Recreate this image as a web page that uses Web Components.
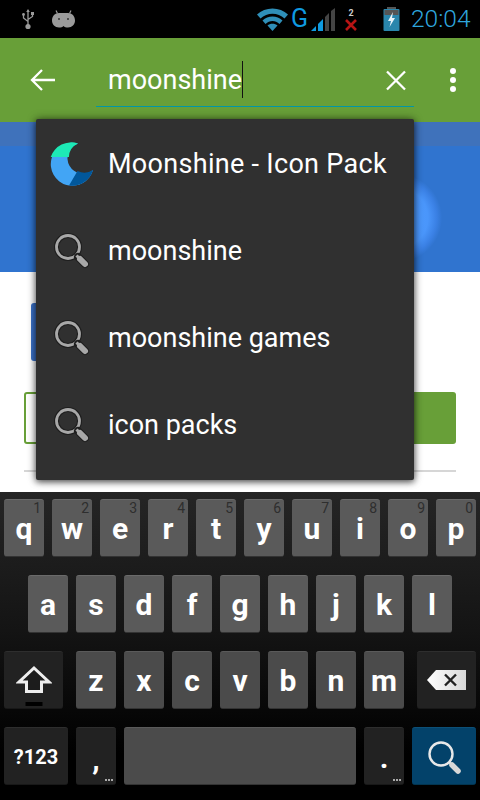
<!DOCTYPE html>
<html>
<head>
<meta charset="utf-8">
<style>
  html, body { margin: 0; padding: 0; background: #fff; }
  body { width: 480px; height: 800px; overflow: hidden; font-family: Roboto, "Liberation Sans", sans-serif; position: relative; }
</style>
</head>
<body>
<status-bar></status-bar>
<search-bar query="moonshine"></search-bar>
<page-behind></page-behind>
<suggestion-list>
  <suggestion-item kind="app">Moonshine - Icon Pack</suggestion-item>
  <suggestion-item>moonshine</suggestion-item>
  <suggestion-item>moonshine games</suggestion-item>
  <suggestion-item>icon packs</suggestion-item>
</suggestion-list>
<soft-keyboard></soft-keyboard>

<script>
'use strict';

const statusTemplate = document.createElement("template");
statusTemplate.innerHTML = `
  <style>
    :host { display: flex; align-items: center; height: 38px; background: #000; position: relative; }
    svg { display: block; flex: none; }
    .g { font: 400 25px Roboto, sans-serif; color: #0f9ae0; width: 17px; margin-left: 3px; line-height: 38px; height: 38px; }
    .time { font: 300 24.5px Roboto, sans-serif; color: #2fa6de; margin-left: 11px; line-height: 38px; }
    .two { font: 700 9px Roboto, sans-serif; color: #ccc; display: block; text-align: center; line-height: 8px; height: 8px; }
    .x { flex: none; width: 14px; margin-left: 8px; margin-top: 2px; }
  </style>
  <svg style="margin-left:21px" width="14" height="21" viewBox="0 0 14 21">
    <path d="M7 1.500V16M7 12.500L2.500 9V6M7 10.500L11.500 7.500V5" fill="none" stroke="#9a9a9a" stroke-width="1.300"/>
    <path d="M7 0L8.800 3H5.200Z" fill="#9a9a9a"/><circle cx="2.500" cy="5.500" r="1.400" fill="#9a9a9a"/>
    <rect x="10" y="3" width="3" height="3" fill="#9a9a9a"/><circle cx="7" cy="17.500" r="2.600" fill="#9a9a9a"/>
  </svg>
  <svg style="margin-left:17px" width="23" height="18" viewBox="0 0 23 18">
    <path d="M5.500 3.500L4 .5M17.500 3.500L19 .5" stroke="#9a9a9a" stroke-width="1.200"/>
    <path d="M7 3C3 3 0 6 0 10.500C0 14.500 3 17.500 7 17.500C9 17.500 10.500 17 11.500 16C12.500 17 14 17.500 16 17.500C20 17.500 23 14.500 23 10.500C23 6 20 3 16 3Z" fill="#9a9a9a"/>
    <circle cx="7" cy="9" r="1" fill="#333"/><circle cx="16" cy="9" r="1" fill="#333"/>
  </svg>
  <svg style="margin-left:182px" width="31" height="23" viewBox="0 0 31 23">
    <path d="M0 6.500C8 -1.500 23 -1.500 31 6.500L27.500 10.500C21 4 10 4 3.500 10.500Z" fill="#2f8fb8"/>
    <path d="M5.500 12.500C11 7 20 7 25.500 12.500L22.500 16C18.500 12 12.500 12 8.500 16Z" fill="#2f8fb8"/>
    <path d="M10.500 17.500C13 15 18 15 20.500 17.500L15.500 23Z" fill="#2f8fb8"/>
  </svg>
  <span class="g">G</span>
  <svg style="margin-left:3px" width="25" height="23" viewBox="0 0 25 23">
    <path d="M0 23L5 18V23Z" fill="#0f9ae0"/><path d="M7 16L12 11V23H7Z" fill="#0f9ae0"/>
    <path d="M14 9L18 5V23H14Z" fill="#444"/><path d="M20 3L24 0V23H20Z" fill="#444"/>
  </svg>
  <span class="x">
    <span class="two">2</span>
    <svg width="14" height="14" viewBox="0 0 14 14" style="margin-top:1px"><path d="M2 2L12 12M12 2L2 12" stroke="#b81414" stroke-width="2.600"/></svg>
  </span>
  <svg style="margin-left:25px" width="17" height="24" viewBox="0 0 17 24">
    <rect x="4" y="0" width="9" height="3" fill="#555"/>
    <rect x="0.500" y="2" width="16" height="22" rx="1" fill="#2a86ac"/>
    <rect x="1.500" y="3" width="14" height="5" fill="#555"/>
    <path d="M10 5L5 14H8L6.500 20L12 11H9Z" fill="#e8f4fa"/>
  </svg>
  <span class="time">20:04</span>
`;
class StatusBar extends HTMLElement {
  constructor() {
    super();
    this.attachShadow({ mode: "open" });
    this.shadowRoot.appendChild(statusTemplate.content.cloneNode(true));
  }
}
customElements.define("status-bar", StatusBar);

const searchTemplate = document.createElement("template");
searchTemplate.innerHTML = `
  <style>
    :host { display: flex; align-items: center; height: 84px; background: #689f38; color: #fff; }
    .back { flex: none; margin-left: 30px; display: block; }
    .field { flex: none; margin-left: 41px; width: 318px; height: 54px; box-sizing: border-box; border-bottom: 1px solid #0097a7;
      display: flex; align-items: center; padding-left: 12px; }
    .text { font-size: 27px; line-height: 36px; }
    .caret { width: 1px; height: 37px; background: #111; }
    .clear { flex: none; margin-left: -28px; position: relative; display: block; }
    .more { flex: none; margin-left: 44px; display: block; }
  </style>
  <svg class="back" width="25" height="24" viewBox="0 0 25 24"><path d="M12 2L2 12L12 22M2 12H25" fill="none" stroke="#fff" stroke-width="2.300"/></svg>
  <div class="field"><span class="text"></span><span class="caret"></span></div>
  <svg class="clear" width="20" height="21" viewBox="0 0 20 21"><path d="M1 1.500L19 19.500M19 1.500L1 19.500" stroke="#fff" stroke-width="2.300"/></svg>
  <svg class="more" width="6" height="24" viewBox="0 0 6 24"><circle cx="3" cy="3" r="3" fill="#fff"/><circle cx="3" cy="12" r="3" fill="#fff"/><circle cx="3" cy="21" r="3" fill="#fff"/></svg>
`;
class SearchBar extends HTMLElement {
  constructor() {
    super();
    this.attachShadow({ mode: "open" });
    this.shadowRoot.appendChild(searchTemplate.content.cloneNode(true));
  }
  connectedCallback() {
    this.shadowRoot.querySelector(".text").textContent = this.getAttribute("query");
  }
}
customElements.define("search-bar", SearchBar);

const pageTemplate = document.createElement("template");
pageTemplate.innerHTML = `
  <style>
    :host { display: flex; flex-direction: column; height: 370px; background: #fff; }
    .hero { height: 150px; background: radial-gradient(circle 44px at 398px 96px, #4f9cff 0%, #4a96fb 68%, #3a80e4 88%, #3074cf 100%), #2e6dc5; background-repeat: no-repeat; position: relative; }
    .strip { height: 24px; background: #3f72bb; }
    .blue { margin: 31px 0 0 31px; width: 200px; height: 58px; background: #3b72c8; border-radius: 3px; }
    .buttons { display: flex; margin: 31px 24px 0; gap: 6px; height: 52px; }
    .buttons div { flex: 1; border-radius: 3px; box-sizing: border-box; }
    .outline { border: 2px solid #689f38; }
    .fill { background: #689f38; }
    hr { margin: 26px 24px 0; border: 0; height: 2px; background: #d6d6d6; }
  </style>
  <div class="hero"><div class="strip"></div></div>
  <div class="blue"></div>
  <div class="buttons"><div class="outline"></div><div class="fill"></div></div>
  <hr>
`;
class PageBehind extends HTMLElement {
  constructor() {
    super();
    this.attachShadow({ mode: "open" });
    this.shadowRoot.appendChild(pageTemplate.content.cloneNode(true));
  }
}
customElements.define("page-behind", PageBehind);

const listTemplate = document.createElement("template");
listTemplate.innerHTML = `
  <style>
    :host { display: flex; flex-direction: column; position: absolute; left: 36px; top: 119px; width: 378px; height: 361px; padding: 1px 0 11px; box-sizing: border-box;
      background: #303030; border-radius: 2px; box-shadow: 0 2px 6px rgba(0,0,0,.55), 0 0 10px rgba(0,0,0,.4); }
  </style>
  <slot></slot>
`;
class SuggestionList extends HTMLElement {
  constructor() {
    super();
    this.attachShadow({ mode: "open" });
    this.shadowRoot.appendChild(listTemplate.content.cloneNode(true));
  }
}
customElements.define("suggestion-list", SuggestionList);

const itemTemplate = document.createElement("template");
itemTemplate.innerHTML = `
  <style>
    :host { display: flex; align-items: center; flex: 1; color: #fff; font-size: 27px; }
    :host([kind="app"]) { letter-spacing: 0.3px; }
    .icon { flex: none; width: 72px; display: flex; justify-content: center; }
    svg { display: block; }
    .label { white-space: nowrap; }
  </style>
  <div class="icon"></div>
  <div class="label"><slot></slot></div>
`;
const MOON_ICON = `<svg width="44" height="44" viewBox="0 0 44 44" style="margin-left:-1px">
  <path d="M28 1.500A21.500 21.500 0 1 0 43 28A15.500 15.500 0 1 1 28 1.500Z" fill="#42a5f5"/>
  <path d="M28 1.500A21.500 21.500 0 0 0 .7 15H18.900A15.500 15.500 0 0 1 28 1.500Z" fill="#1de9b6"/>
  <path d="M43 28A21.500 21.500 0 0 1 19 43.400L27.500 29A15.500 15.500 0 0 0 43 28Z" fill="#01579b"/>
</svg>`;
const SEARCH_ICON = `<svg width="36" height="36" viewBox="0 0 36 36">
  <circle cx="14" cy="14" r="11.500" fill="none" stroke="#1e1e1e" stroke-width="5"/>
  <circle cx="14" cy="14" r="11.500" fill="none" stroke="#a8a8a8" stroke-width="2.800"/>
  <path d="M24 24L31 31" stroke="#1e1e1e" stroke-width="8" stroke-linecap="round"/>
  <path d="M22.500 22.500L26 26" stroke="#a8a8a8" stroke-width="3"/>
  <path d="M26 26L31 31" stroke="#a8a8a8" stroke-width="6" stroke-linecap="round"/>
</svg>`;
class SuggestionItem extends HTMLElement {
  constructor() {
    super();
    this.attachShadow({ mode: "open" });
    this.shadowRoot.appendChild(itemTemplate.content.cloneNode(true));
  }
  connectedCallback() {
    this.shadowRoot.querySelector(".icon").innerHTML = this.getAttribute("kind") == "app" ? MOON_ICON : SEARCH_ICON;
  }
}
customElements.define("suggestion-item", SuggestionItem);

const keyTemplate = document.createElement("template");
keyTemplate.innerHTML = `
  <style>
    :host { display: flex; align-items: center; justify-content: center; position: relative; flex: none; width: 40px; box-sizing: border-box;
      background: #5a5a5a; border-radius: 3px; border-top: 1px solid #6a6a6a; border-bottom: 1px solid #333;
      color: #fff; font-weight: 700; font-size: 30px; line-height: 1; }
    :host([wide]) { width: 59px; }
    :host([mid]) { width: 64px; }
    :host([space]) { width: 232px; }
    :host([row3]), :host([row4]) { background: #4b4b4b; border-top-color: #5a5a5a; }
    :host([dark]) { background: #222; border-top-color: #2e2e2e; border-bottom-color: #181818; }
    :host([action]) { background: #03426a; border-top-color: #0c5077; border-bottom-color: #033550; }
    .hint { position: absolute; top: 0; right: 3px; font-size: 14px; font-weight: 400; color: #2e2e2e; line-height: 16px; }
    .label { margin-top: 2px; }
    .dots { position: absolute; right: 3px; bottom: 3px; width: 8px; height: 2px;
      background: repeating-linear-gradient(90deg, #aaa 0 2px, transparent 2px 3px); }
  </style>
  <span class="label"><slot></slot></span>
`;
class KbKey extends HTMLElement {
  constructor() {
    super();
    this.attachShadow({ mode: "open" });
    this.shadowRoot.appendChild(keyTemplate.content.cloneNode(true));
  }
  connectedCallback() {
    if (this.hasAttribute("hint") && !this.shadowRoot.querySelector(".hint")) {
      const hint = document.createElement("span");
      hint.className = "hint";
      hint.textContent = this.getAttribute("hint");
      this.shadowRoot.appendChild(hint);
    }
    if (this.hasAttribute("more") && !this.shadowRoot.querySelector(".dots")) {
      const dots = document.createElement("span");
      dots.className = "dots";
      this.shadowRoot.appendChild(dots);
    }
  }
}
customElements.define("kb-key", KbKey);

const keyboardTemplate = document.createElement("template");
keyboardTemplate.innerHTML = `
  <style>
    :host { display: flex; flex-direction: column; gap: 18px; position: absolute; left: 0; top: 492px; width: 480px; height: 308px; box-sizing: border-box;
      padding-top: 7px; background: linear-gradient(#252525, #141414 45%, #000 85%); }
    .row { display: flex; height: 58px; gap: 8px; padding-left: 4px; }
    .row.second { padding-left: 28px; }
    .row kb-key { height: 58px; }
    .shift { margin-right: 5px; }
    .del { margin-left: 5px; }
    svg { display: block; }
  </style>
  <div class="row" id="r1"></div>
  <div class="row second" id="r2"></div>
  <div class="row" id="r3">
    <kb-key dark wide row3 class="shift">
      <svg width="36" height="52" viewBox="0 0 36 52" style="margin-top:-2px">
        <path d="M18 14L33 28H25.500V37.500H10.500V28H3Z" fill="#1c1c1c" stroke="#eee" stroke-width="3"/>
        <rect x="9.500" y="48" width="17" height="4" fill="#000"/>
      </svg>
    </kb-key>
    <span id="r3keys" style="display:contents"></span>
    <kb-key dark wide row3 class="del">
      <svg width="40" height="20" viewBox="0 0 40 20" style="margin-top:-2px">
        <defs><linearGradient id="delfill" x1="0" x2="1" y1="0" y2="0"><stop offset="0" stop-color="#fff"/><stop offset="1" stop-color="#d8d8d8"/></linearGradient></defs>
        <path d="M0 10L9 0H39V20H9Z" fill="url(#delfill)"/>
        <path d="M18 4.500L29 15.500M29 4.500L18 15.500" stroke="#222" stroke-width="2.400"/>
      </svg>
    </kb-key>
  </div>
  <div class="row" id="r4">
    <kb-key dark mid row4 style="font-size:20px">?123</kb-key>
    <kb-key dark row4 more><span style="display:block;margin-top:5px;font-size:30px">,</span></kb-key>
    <kb-key space row4></kb-key>
    <kb-key dark row4 more><span style="display:block;margin-top:1px;font-size:30px">.</span></kb-key>
    <kb-key mid row4 action>
      <svg width="34" height="34" viewBox="0 0 34 34">
        <circle cx="14" cy="14" r="11.500" fill="none" stroke="#e8e8e8" stroke-width="2.400"/>
        <path d="M22.500 22.500L25 25" stroke="#e8e8e8" stroke-width="2.400"/>
        <path d="M25 25L31 31" stroke="#d8d8d8" stroke-width="5.500" stroke-linecap="round"/>
      </svg>
    </kb-key>
  </div>
`;
class SoftKeyboard extends HTMLElement {
  constructor() {
    super();
    this.attachShadow({ mode: "open" });
    this.shadowRoot.appendChild(keyboardTemplate.content.cloneNode(true));
    const root = this.shadowRoot;
    "qwertyuiop".split("").forEach((c, i) => {
      const key = document.createElement("kb-key");
      key.setAttribute("hint", String((i + 1) % 10));
      key.textContent = c;
      root.querySelector("#r1").appendChild(key);
    });
    "asdfghjkl".split("").forEach((c) => {
      const key = document.createElement("kb-key");
      key.textContent = c;
      root.querySelector("#r2").appendChild(key);
    });
    "zxcvbnm".split("").forEach((c) => {
      const key = document.createElement("kb-key");
      key.setAttribute("row3", "");
      key.textContent = c;
      root.querySelector("#r3keys").appendChild(key);
    });
  }
}
customElements.define("soft-keyboard", SoftKeyboard);
</script>
</body>
</html>
